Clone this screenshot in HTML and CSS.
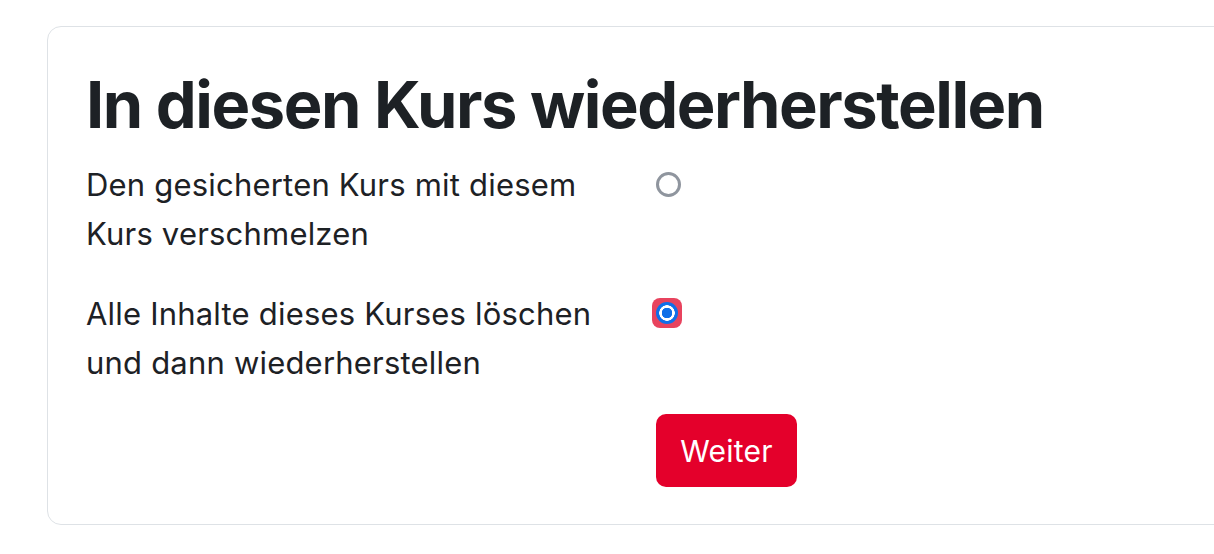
FILE: index.html
```html
<!DOCTYPE html>
<html lang="de">
<head>
<meta charset="utf-8">
<title>In diesen Kurs wiederherstellen</title>
<link rel="stylesheet" href="styles.css">
</head>
<body>
<div class="page">
  <form class="card">
    <h2 class="title">In diesen Kurs wiederherstellen</h2>
    <div class="row">
      <label class="label" for="r1">Den gesicherten Kurs mit diesem Kurs verschmelzen</label>
      <div class="field"><input class="radio" type="radio" name="target" id="r1"></div>
    </div>
    <div class="row">
      <label class="label" for="r2">Alle Inhalte dieses Kurses löschen und dann wiederherstellen</label>
      <div class="field"><span class="focus"><input class="radio" type="radio" name="target" id="r2" checked></span></div>
    </div>
    <div class="actions">
      <button type="button" class="btn">Weiter</button>
    </div>
  </form>
</div>
</body>
</html>
```
FILE: styles.css
```css
html, body {
  margin: 0;
  padding: 0;
  overflow: hidden;
  background: #ffffff;
}
body {
  font-family: Inter, "Noto Sans", "Liberation Sans", sans-serif;
  color: #1d2125;
}
.page {
  padding: 26px 0 0 47px;
}
.card {
  width: 1300px;
  box-sizing: border-box;
  border: 1px solid #dee2e6;
  border-radius: 14px;
  padding: 38px 38px 36px 38px;
  height: 499px;
}
.title {
  margin: 0 0 15px 0;
  font-size: 65px;
  font-weight: 700;
  line-height: 80px;
  letter-spacing: -1.45px;
}
.row {
  display: grid;
  grid-template-columns: 570px 1fr;
  margin-bottom: 31px;
}
.label {
  font-size: 31px;
  line-height: 49px;
  letter-spacing: 0.2px;
  padding-right: 30px;
}
.field {
  display: flex;
  align-items: flex-start;
  padding-top: 12px;
}
.radio {
  appearance: none;
  -webkit-appearance: none;
  margin: 0;
  width: 25px;
  height: 25px;
  border: 3px solid #8f959e;
  border-radius: 50%;
  box-sizing: border-box;
  background: #fff;
}
.radio:checked {
  border: 0;
  background: radial-gradient(circle, #0f6fe8 0 5px, #ffffff 5.5px 7.5px, #0f6fe8 8px);
  width: 22px;
  height: 22px;
}
.focus {
  display: inline-flex;
  padding: 4px;
  margin: -3px 0 0 -4px;
  border-radius: 8px;
  background: #e8435e;
}
.actions {
  padding-left: 570px;
  margin-top: -4px;
}
.btn {
  font-family: inherit;
  font-size: 30px;
  letter-spacing: 0.2px;
  color: #ffffff;
  background: #e4002b;
  border: 0;
  border-radius: 10px;
  width: 141px;
  height: 73px;
  padding: 0;
}
```
